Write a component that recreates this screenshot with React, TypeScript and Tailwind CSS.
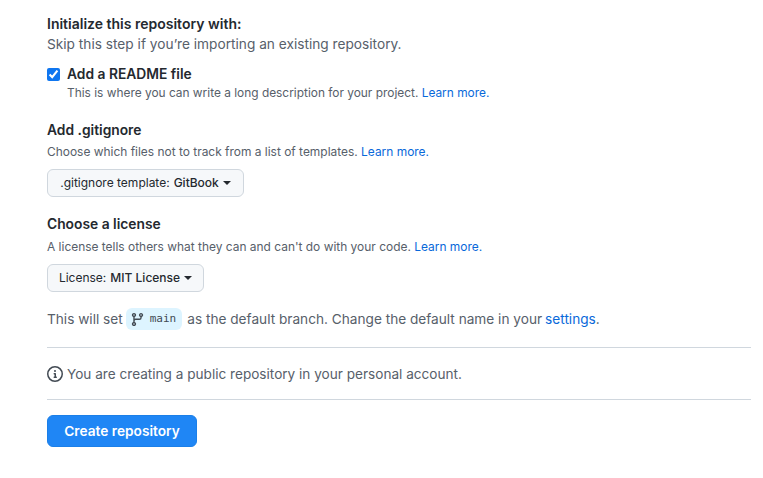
const FONT = "font-['Inter','Liberation_Sans',sans-serif]";

function LearnMore() {
  return <a className="text-[#0969da]">Learn more.</a>;
}

function SelectButton({ label, value, width }: { label: string; value: string; width: string }) {
  return (
    <button className={`flex h-7 ${width} items-center justify-center rounded-md border border-[#d0d7de] bg-[#f6f8fa] text-[12px] text-[#24292f]`}>
      {label}
      <span className="ml-1 font-medium">{value}</span>
      <span className="ml-1 h-0 w-0 border-x-[4px] border-t-[4px] border-x-transparent border-t-[#24292f]" />
    </button>
  );
}

export default function App() {
  return (
    <div className={`h-[478px] w-[763px] overflow-hidden bg-white pl-[47px] pr-3 pt-[15px] ${FONT} text-[#24292f] antialiased`}>
      <h3 className="text-[14px] font-semibold leading-[18px]">Initialize this repository with:</h3>
      <p className="mt-[1px] text-[13.7px] leading-[20px] text-[#57606a]">Skip this step if you’re importing an existing repository.</p>

      <div className="mt-[12px] flex items-start">
        <input type="checkbox" defaultChecked readOnly className="mt-[2px] h-[13px] w-[13px] accent-[#0f76f0]" />
        <div className="ml-[7px]">
          <div className="text-[13.8px] font-semibold leading-[16px]">Add a README file</div>
          <div className="mt-[2px] text-[11.9px] leading-[18px] text-[#57606a]">
            This is where you can write a long description for your project. <LearnMore />
          </div>
        </div>
      </div>

      <h4 className="mt-[18px] text-[13.8px] font-semibold leading-[20px]">Add .gitignore</h4>
      <p className="mt-[3px] text-[11.95px] leading-[18px] text-[#57606a]">
        Choose which files not to track from a list of templates. <LearnMore />
      </p>
      <div className="mt-[8px]">
        <SelectButton label=".gitignore template:" value="GitBook" width="w-[197px]" />
      </div>

      <h4 className="mt-[17px] text-[13.8px] font-semibold leading-[20px]">Choose a license</h4>
      <p className="mt-[4px] text-[11.95px] leading-[18px] text-[#57606a]">
        A license tells others what they can and can't do with your code. <LearnMore />
      </p>
      <div className="mt-[8px]">
        <SelectButton label="License:" value="MIT License" width="w-[157px]" />
      </div>

      <p className="mt-[16px] flex items-center text-[13.65px] leading-[22px] text-[#57606a]">
        This will set
        <code className="ml-[3px] mr-[5px] inline-flex h-[22px] items-center rounded-md bg-[#ddf4ff] pl-[4px] pr-[6px] font-['DejaVu_Sans_Mono','Liberation_Mono',monospace] text-[11px] text-[#424a53]">
          <svg viewBox="0 0 16 16" className="mr-[5px] h-[15px] w-[15px] fill-[#424a53]">
            <path d="M9.5 3.25a2.25 2.25 0 1 1 3 2.122V6A2.5 2.5 0 0 1 10 8.5H6a1 1 0 0 0-1 1v1.128a2.251 2.251 0 1 1-1.5 0V5.372a2.25 2.25 0 1 1 1.5 0v1.836A2.493 2.493 0 0 1 6 7h4a1 1 0 0 0 1-1v-.628A2.25 2.25 0 0 1 9.5 3.25Zm-6 0a.75.75 0 1 0 1.5 0 .75.75 0 0 0-1.5 0Zm8.25-.75a.75.75 0 1 0 0 1.5.75.75 0 0 0 0-1.5ZM4.25 12a.75.75 0 1 0 0 1.5.75.75 0 0 0 0-1.5Z" />
          </svg>
          main
        </code>
        as the default branch. Change the default name in your
        <a className="ml-[3px] text-[#0969da]">settings</a>.
      </p>

      <div className="mt-[17px] w-[704px] border-t border-[#d0d7de]" />
      <div className="mt-[16px] flex items-center text-[13.6px] leading-[20px] text-[#57606a]">
        <svg viewBox="0 0 16 16" className="mr-[4px] h-4 w-4 fill-[#424a53]">
          <path d="M0 8a8 8 0 1 1 16 0A8 8 0 0 1 0 8Zm8-6.5a6.5 6.5 0 1 0 0 13 6.5 6.5 0 0 0 0-13ZM6.5 7.75A.75.75 0 0 1 7.25 7h1a.75.75 0 0 1 .75.75v2.75h.25a.75.75 0 0 1 0 1.5h-2a.75.75 0 0 1 0-1.5h.25v-2h-.25a.75.75 0 0 1-.75-.75ZM8 6a1 1 0 1 1 0-2 1 1 0 0 1 0 2Z" />
        </svg>
        You are creating a public repository in your personal account.
      </div>
      <div className="mt-[15px] w-[704px] border-t border-[#d0d7de]" />

      <button className="mt-[15px] h-8 w-[150px] rounded-md border border-[#1b7fe8] bg-[#1f86f5] text-[13.7px] font-semibold text-white">
        Create repository
      </button>
    </div>
  );
}
